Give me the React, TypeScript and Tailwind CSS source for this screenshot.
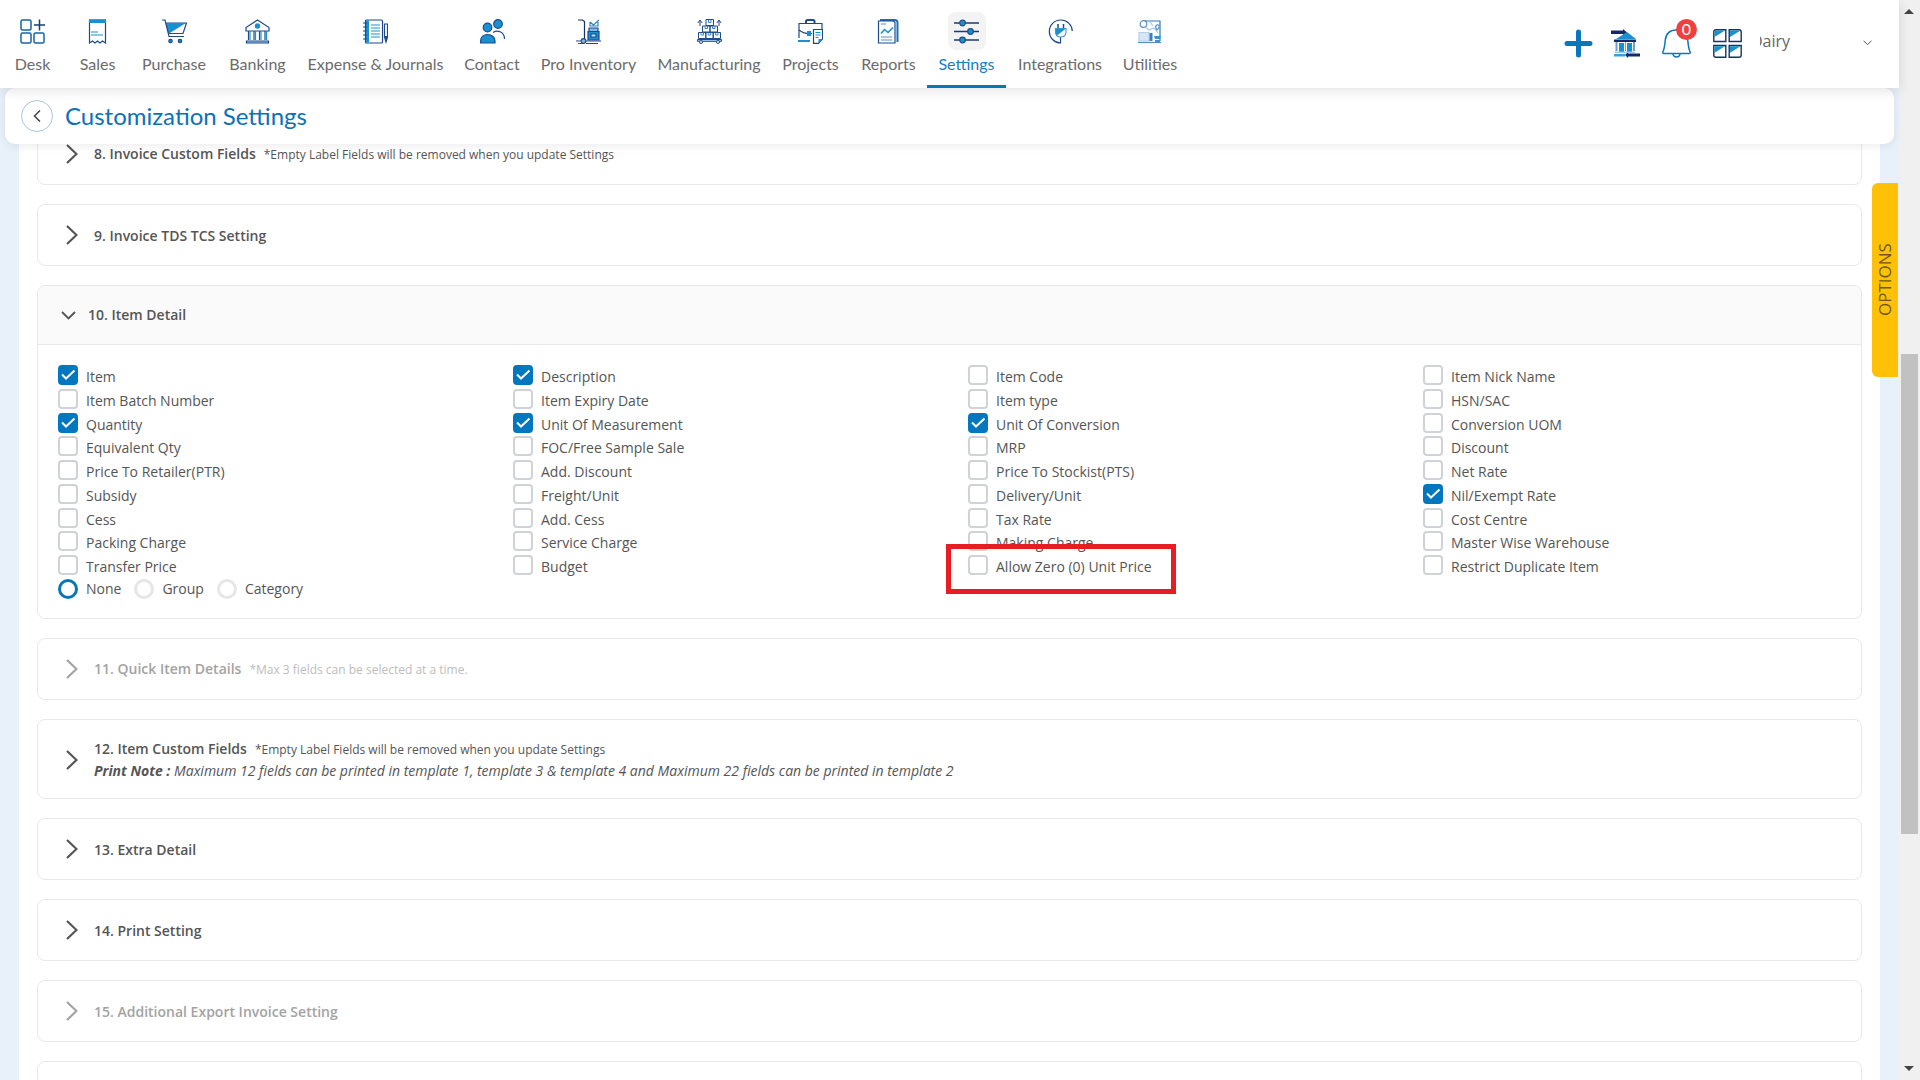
import { useState, type ReactNode } from "react";
import clsx from "clsx";

const NAVY = "#1f4a8a";
const BLUE = "#1791d0";

function Icon({ children, className = "size-[25px]" }: { children: ReactNode; className?: string }) {
    return (
        <svg viewBox="0 0 25 25" fill="none" stroke={NAVY} strokeWidth="1.2" className={className} aria-hidden="true">
            {children}
        </svg>
    );
}

// Top navigation, icons are two-tone line drawings
const NAV_ITEMS = [
    {
        label: "Desk",
        width: "w-[65px]",
        icon: (
            <Icon>
                <g stroke="#1b62a5" strokeWidth="1.5">
                    <rect x="1" y="1" width="10" height="10" rx="1.5" />
                    <rect x="1" y="14" width="10" height="10" rx="1.5" />
                    <rect x="14" y="14" width="10" height="10" rx="1.5" />
                </g>
                <path d="M19.5 .5v11M14 6h11" stroke="#1d3b72" strokeWidth="1.5" />
            </Icon>
        ),
    },
    {
        label: "Sales",
        width: "w-[65px]",
        icon: (
            <Icon>
                <path d="M4.5 1h16v23l-3-2-2.5 2-2.5-2-2.5 2-2.5-2-3 2z" />
                <path d="M4 .5h17V4H4z" fill={BLUE} stroke="none" />
                <path d="M6 13h7M6 16h12" stroke={BLUE} />
            </Icon>
        ),
    },
    {
        label: "Purchase",
        width: "w-[88px]",
        icon: (
            <Icon>
                <path d="M0 1h3l4 16.5h15" />
                <path d="M4.5 4H24.5L21 14.5H7z" />
                <path d="M4.5 4H24L7 14.5z" fill={BLUE} stroke="none" />
                <circle cx="8.5" cy="22" r="1.7" fill={BLUE} />
                <circle cx="18" cy="22" r="1.7" fill={BLUE} />
            </Icon>
        ),
    },
    {
        label: "Banking",
        width: "w-[79px]",
        icon: (
            <Icon>
                <path d="M12.5 1 24 8.5V12H1V8.5z" />
                <circle cx="12.5" cy="7" r="2.7" fill={BLUE} stroke="none" />
                <path d="M3.5 12v9M9 12v9M14.5 12v9M20 12v9" />
                <path d="M5 12v9M10.5 12v9M16 12v9M21.5 12v9" stroke={BLUE} />
                <path d="M1.5 22h22v2h-22z" fill="#9fc9ec" />
            </Icon>
        ),
    },
    {
        label: "Expense & Journals",
        width: "w-[157px]",
        icon: (
            <Icon>
                <rect x="2.5" y="1" width="17" height="23" rx="1" />
                <path d="M3 1.5h3v22H3z" fill={BLUE} stroke="none" />
                <path d="M0 4h4M0 8h4M0 12h4M0 16h4M0 20h4" />
                <path d="M8 6h9M8 9h9M8 12h9M8 15h9M8 18h9" stroke={BLUE} />
                <path d="M21.5 5h3v13l-1.5 5-1.5-5z" />
                <path d="M21.5 17h3L23 23z" fill={NAVY} stroke="none" />
            </Icon>
        ),
    },
    {
        label: "Contact",
        width: "w-[76px]",
        icon: (
            <Icon>
                <circle cx="18" cy="5" r="4.3" fill={BLUE} />
                <circle cx="7.5" cy="8.5" r="4.3" fill={BLUE} />
                <path d="M.6 24v-2c0-4 3-6.5 7-6.5s7.4 2.5 7.4 6.5v2z" fill={BLUE} />
                <path d="M13 13.5c5-3 11.5-.5 11.5 6.5" />
            </Icon>
        ),
    },
    {
        label: "Pro Inventory",
        width: "w-[117px]",
        icon: (
            <Icon>
                <path d="M2 1h4.5l2 1.5V20" stroke="#1a2f63" />
                <path d="m14 3 3.5 3L23 1M14 3v4h8V3" stroke="#2f7fc2" />
                <path d="M13 9h9v3.5h-9z" fill="#7fb8e4" />
                <path d="M12 12.500h11V21H12z" fill={BLUE} />
                <path d="M15 15h5v3h-5z" fill="#bfe0f6" />
                <circle cx="7.5" cy="22" r="2.3" fill="#7fb8e4" />
                <path d="M0 22h5M10 22h15M2 24.5h5M10 24.5h12" />
            </Icon>
        ),
    },
    {
        label: "Manufacturing",
        width: "w-[124px]",
        icon: (
            <Icon>
                <g strokeWidth="1">
                    <path d="M9 .5h7.500v6H9zM5.500 7h7.500v6H5.500zM13 7h7.500v6H13zM1.500 13.500h7.300v6H1.500zM8.800 13.500h7.400v6H8.800zM16.200 13.500h7.300v6h-7.300z" />
                    <path d="M11.500 1v2.500H14V1M8 7v2.500h2.500V7M15.500 7v2.500H18V7M4 13.500V16h2.500v-2.500M11.200 13.500V16h2.500v-2.500M18.500 13.500V16H21v-2.500" stroke="#3f86c6" />
                    <path d="M.5 20.500h24v1.800H.5z" fill="#b9d8f2" />
                    <circle cx="4" cy="23" r="1.5" fill="#fff" />
                    <circle cx="21" cy="23" r="1.5" fill="#fff" />
                    <path d="M3 7V1.500M.8 4 3 1l2.200 3M22 7V1.500M19.800 4 22 1l2.200 3" />
                </g>
            </Icon>
        ),
    },
    {
        label: "Projects",
        width: "w-[79px]",
        icon: (
            <Icon>
                <path d="M8 4V2.5C8 1.5 8.5 1 9.5 1H15c1 0 1.500.5 1.500 1.500V4" strokeWidth="2" />
                <path d="M1 19V4.500h23V10" />
                <path d="M1 11c3 2.500 6 3.500 10 3.500h3" />
                <path d="M9 12h4v5H9z" fill={BLUE} stroke="none" />
                <path d="M0 22h12" stroke={BLUE} strokeWidth="2" />
                <path d="M15.500 10.500h9V20l-4 4.300h-5z" fill="#fff" />
                <path d="M17.500 13.500h5M17.500 16h5M17.500 18.500h3" stroke={BLUE} />
                <path d="M20.500 24v-4h4z" fill={BLUE} stroke="none" />
            </Icon>
        ),
    },
    {
        label: "Reports",
        width: "w-[77px]",
        icon: (
            <Icon>
                <path d="M4 1h15c1.500 0 2.500 1 2.500 2.500V23" stroke="#1873b8" strokeWidth="2" />
                <path d="M2.500 2h14c1.500 0 2.500.7 2.500 2.200V24H2.500z" fill="#fff" />
                <path d="m5 14.500 3.500-4 3.500 3 5-5" stroke={BLUE} strokeWidth="1.5" />
                <path d="M5 5h5M5 18h11M5 21h11" strokeWidth=".9" stroke="#3f86c6" />
            </Icon>
        ),
    },
    {
        label: "Settings",
        width: "w-[79px]",
        icon: (
            <Icon>
                <path d="M0 4h25M0 12.500h25M0 21h25" stroke="#1b3b74" strokeWidth="1.4" />
                <circle cx="8.5" cy="4" r="2.8" fill={BLUE} />
                <circle cx="16.5" cy="12.5" r="2.8" fill={BLUE} />
                <circle cx="8.5" cy="21" r="2.8" fill={BLUE} />
            </Icon>
        ),
    },
    {
        label: "Integrations",
        width: "w-[108px]",
        icon: (
            <Icon>
                <path d="M12.500 24.500V18M12.500 24A11.500 11.500 0 1 1 24.300 12" />
                <path d="M10 9V5M15.500 9V5" strokeWidth="1.5" />
                <path d="M7.500 9.500H18V13c0 3-2 5-5.300 5S7.500 16 7.500 13z" stroke="#5b9bd0" />
                <path d="M7.500 9.500H18l-9 7c-1-1-1.500-2-1.500-3.500z" fill={BLUE} stroke="none" />
            </Icon>
        ),
    },
    {
        label: "Utilities",
        width: "w-[72px]",
        icon: (
            <Icon>
                <path d="M5 2h17v20" stroke="#2f78b8" />
                <circle cx="5.5" cy="5" r="3.3" fill="#fff" stroke="#5b8fc4" />
                <path d="m7 8 4 3 5-2 4 5M12 3l3 4" stroke="#9fc9ec" />
                <path d="M19 11c-3-4 0-6 1.500-5s.5 3.500-1.500 5z" stroke="#5b8fc4" fill="#fff" />
                <path d="M1 13.500h10V22H1z" fill="#d6e6f7" stroke="#b5cfea" />
                <path d="M11.500 14h3v8h-3z" fill="#3d7fc0" stroke="none" />
                <path d="M16 17h7l-1 3h-5zM17 21h5v2h-5z" fill="#3d92d2" stroke="none" />
                <path d="M0 23.500h23" stroke="#5b8fc4" />
            </Icon>
        ),
    },
];

const ITEM_FIELDS = [
    ["Item", "Item Batch Number", "Quantity", "Equivalent Qty", "Price To Retailer(PTR)", "Subsidy", "Cess", "Packing Charge", "Transfer Price"],
    ["Description", "Item Expiry Date", "Unit Of Measurement", "FOC/Free Sample Sale", "Add. Discount", "Freight/Unit", "Add. Cess", "Service Charge", "Budget"],
    ["Item Code", "Item type", "Unit Of Conversion", "MRP", "Price To Stockist(PTS)", "Delivery/Unit", "Tax Rate", "Making Charge", "Allow Zero (0) Unit Price"],
    ["Item Nick Name", "HSN/SAC", "Conversion UOM", "Discount", "Net Rate", "Nil/Exempt Rate", "Cost Centre", "Master Wise Warehouse", "Restrict Duplicate Item"],
];

const ENABLED = ["Item", "Quantity", "Description", "Unit Of Measurement", "Unit Of Conversion", "Nil/Exempt Rate"];

function Header() {
    return (
        <header className="relative z-20 flex h-[88px] shrink-0 bg-white font-[Lato,sans-serif] shadow-[0_2px_12px_rgba(0,0,0,0.12)]">
            <nav className="flex">
                {NAV_ITEMS.map(({ label, width, icon }) => {
                    const active = label === "Settings";
                    return (
                        <a
                            key={label}
                            href="#"
                            className={clsx(
                                "flex shrink-0 flex-col items-center border-b-3 pt-3 text-base leading-5 whitespace-nowrap",
                                width,
                                active ? "border-[#0a76b5] text-[#1580c4]" : "border-transparent text-[#6b6b6b]"
                            )}
                        >
                            <span className={clsx("mb-1 flex size-[38px] items-center justify-center rounded-lg", active && "bg-[#f3f3f4]")}>{icon}</span>
                            {label}
                        </a>
                    );
                })}
            </nav>
            <div className="ml-auto flex items-center gap-[18px] pr-[25px] pb-[2px]">
                <button aria-label="Create new">
                    <svg viewBox="0 0 29 29" className="size-[29px]" stroke="#0a76bd" strokeWidth="5" strokeLinecap="round">
                        <path d="M14.500 3v23M3 14.500h23" />
                    </svg>
                </button>
                <button aria-label="Bank transfer">
                    <svg viewBox="0 0 29 29" className="size-[29px]">
                        <path d="M0 1.500h12V0l4 3.500L12 6V5H0zM29 24.500H17v-1.500L14 26l3 3v-1.500h12z" fill="#14286a" />
                        <path d="m5 10 11-7 9 7z" fill={BLUE} />
                        <path d="M3 10.500h22V13H3z" fill="#14286a" />
                        <path d="M8 14h5v9H8zM16 14h5v9h-5z" fill={BLUE} />
                        <path d="M4.500 13h2v9h-2zM14 13h1v9h-1zM22 13h2v9h-2z" fill="#6f9fd0" />
                        <path d="M4 22.500h20V24H4z" fill="#9fc9ec" />
                        <path d="M3 25h11v2.500H3z" fill="#3aa0dd" />
                    </svg>
                </button>
                <button aria-label="Notifications" className="relative ml-1">
                    <svg viewBox="0 0 29 29" className="size-[29px]" fill="none" stroke="#0f78bb" strokeWidth="1.5">
                        <path d="M2 24.500c-1.200 0-1.500-1-1-2 1.500-3 1.700-6 2.200-11C3.900 4.500 8 1 14.500 1S25.100 4.500 25.800 11.500c.5 5 .7 8 2.200 11 .5 1 .2 2-1 2z" />
                        <path d="M11 25c.5 4 6.500 4 7 0" />
                    </svg>
                    <span className="absolute -top-[10px] left-[14px] flex size-[21px] items-center justify-center rounded-full bg-[#ef4040] text-base text-white">0</span>
                </button>
                <button aria-label="Apps" className="ml-1">
                    <svg viewBox="0 0 29 29" className="size-[29px]" fill="#fff" stroke="#14365f" strokeWidth="1.4">
                        <path d="M3 .8h9.800v11.700H.8V3Q.8.8 3 .8zM16.200.8H26q2.200 0 2.200 2.200v9.500h-12zM.8 16.500h12v11.700H3Q.8 28.200.8 26zM16.200 16.500h12V26q0 2.200-2.200 2.200h-9.800z" />
                        <path d="M1.500 1.500H12L1.500 8zM17 1.500h10.500L17 8zM1.500 17.200H12l-10.500 6.500zM17 17.200h10.500L17 23.700z" fill={BLUE} stroke="none" />
                    </svg>
                </button>
                <button className="flex w-[114px] items-center justify-between" aria-label="Dairy account">
                    <span className="mb-1 flex w-[30px] justify-end overflow-hidden font-['Open_Sans',sans-serif] text-base leading-6 font-medium text-[#666]">Dairy</span>
                    <svg viewBox="0 0 9 6" className="mr-[2px] h-[6px] w-[9px]" fill="none" stroke="#555">
                        <path d="m.5.7 4 4 4-4" />
                    </svg>
                </button>
            </div>
        </header>
    );
}

function TitleBar() {
    return (
        <div className="relative z-10 mx-[5px] flex h-14 shrink-0 items-center gap-3 rounded-[10px] bg-white px-4 shadow-[0_2px_10px_rgba(0,0,0,0.08)]">
            <button aria-label="Back" className="flex size-8 items-center justify-center rounded-full border border-[#a9c6e2]">
                <svg viewBox="0 0 8 12" className="h-3 w-2" fill="none" stroke="#444" strokeWidth="1.5">
                    <path d="M7 .5 1.500 6 7 11.500" />
                </svg>
            </button>
            <h1 className="font-[Lato,sans-serif] text-2xl text-[#0a72b8]">Customization Settings</h1>
        </div>
    );
}

type SectionProps = { title: string; hint?: string; note?: ReactNode; disabled?: boolean };

function Section({ title, hint, note, disabled }: SectionProps) {
    return (
        <section className="rounded-lg border border-[#e8e8e8]">
            <button
                disabled={disabled}
                className={clsx("flex min-h-[60px] w-full items-center gap-4 pl-7 text-left", note && "pt-[18px] pb-[17px]", disabled ? "text-[#a3a3a3]" : "text-[#555]")}
            >
                <svg viewBox="0 0 12 20" className="h-5 w-3 shrink-0" fill="none" stroke="currentColor" strokeWidth="2.2">
                    <path d="m1 1 9.500 9L1 19" />
                </svg>
                <span>
                    <span className="flex items-baseline gap-2">
                        <span className="text-sm leading-[21px] font-semibold">{title}</span>
                        {hint && <span className={clsx("text-xs leading-[21px] font-medium", disabled && "text-[#bdbdbd]")}>{hint}</span>}
                    </span>
                    {note}
                </span>
            </button>
        </section>
    );
}

function FieldCheckbox({ label }: { label: string }) {
    const [checked, setChecked] = useState(ENABLED.includes(label));

    return (
        <label className="flex items-start gap-2 text-sm leading-6">
            <span className="grid size-5 shrink-0">
                <input
                    type="checkbox"
                    checked={checked}
                    onChange={(e) => setChecked(e.target.checked)}
                    className="col-start-1 row-start-1 size-5 appearance-none rounded-sm border-2 border-[#cfd2d6] bg-white checked:border-[#0077bf] checked:bg-[#0077bf]"
                />
                {checked && (
                    <svg viewBox="0 0 20 20" className="pointer-events-none col-start-1 row-start-1 size-5" fill="none" stroke="#fff" strokeWidth="2">
                        <path d="m4 9.500 4 4 8.500-8" />
                    </svg>
                )}
            </span>
            {label}
        </label>
    );
}

function ItemDetail() {
    const [group, setGroup] = useState("None");

    return (
        <section className="rounded-lg border border-[#e8e8e8]">
            <button className="flex h-[59px] w-full items-center gap-3 rounded-t-lg border-b border-[#e8e8e8] bg-[#fafafa] pl-[23px] text-left text-sm font-semibold text-[#555]">
                <svg viewBox="0 0 15 9" className="h-[9px] w-[15px]" fill="none" stroke="currentColor" strokeWidth="1.8">
                    <path d="m1 1 6.500 6.500L14 1" />
                </svg>
                10. Item Detail
            </button>
            <div className="pt-5 pb-[19px] text-[#555]">
                <div className="grid grid-cols-4 pr-[3px]">
                    {ITEM_FIELDS.map((column) => (
                        <div key={column[0]} className="grid h-[214px] auto-rows-fr pl-5">
                            {column.map((label) => (
                                <FieldCheckbox key={label} label={label} />
                            ))}
                        </div>
                    ))}
                </div>
                <div className="flex gap-[13px] pl-5 text-sm leading-5">
                    {["None", "Group", "Category"].map((option) => (
                        <label key={option} className="flex items-center gap-2">
                            <input
                                type="radio"
                                name="group"
                                checked={group === option}
                                onChange={() => setGroup(option)}
                                className="size-5 appearance-none rounded-full border-3 border-[#e6e6e6] checked:border-[#0a76b5]"
                            />
                            {option}
                        </label>
                    ))}
                </div>
            </div>
        </section>
    );
}

function ScrollRail() {
    return (
        <div className="flex w-[21px] shrink-0 flex-col bg-[#f0f0f0] px-[2px]" aria-hidden="true">
            <svg viewBox="0 0 16 20" className="h-5 w-4" fill="#444">
                <path d="M8 9l5 5H3z" />
            </svg>
            <div className="flex-[334]" />
            <div className="flex-[480] bg-[#c1c1c1]" />
            <div className="flex-[226]" />
            <svg viewBox="0 0 16 20" className="h-5 w-4" fill="#444">
                <path d="M8 11l5-5H3z" />
            </svg>
        </div>
    );
}

export default function App() {
    return (
        <div className="flex h-screen overflow-hidden bg-[#e8f1f9] font-['Open_Sans',sans-serif]">
            <div className="relative flex min-w-0 flex-1 flex-col">
                <Header />
                <TitleBar />
                <main className="flex-1 overflow-hidden px-[19px]">
                    {/* scrolled so that the first card sits partly under the title bar */}
                    <div className="-mt-[21px] flex flex-col gap-[19px] bg-white px-[18px]">
                        <Section title="8. Invoice Custom Fields" hint="*Empty Label Fields will be removed when you update Settings" />
                        <Section title="9. Invoice TDS TCS Setting" />
                        <ItemDetail />
                        <Section title="11. Quick Item Details" hint="*Max 3 fields can be selected at a time." disabled />
                        <Section
                            title="12. Item Custom Fields"
                            hint="*Empty Label Fields will be removed when you update Settings"
                            note={
                                <span className="block text-sm leading-[21px] italic">
                                    <b>Print Note :</b> Maximum 12 fields can be printed in template 1, template 3 &amp; template 4 and Maximum 22 fields can be printed in template 2
                                </span>
                            }
                        />
                        <Section title="13. Extra Detail" />
                        <Section title="14. Print Setting" />
                        <Section title="15. Additional Export Invoice Setting" disabled />
                        <section className="h-[62px] rounded-lg border border-[#e8e8e8]" />
                    </div>
                </main>

                <button className="absolute top-[183px] right-px flex h-[194px] w-[26px] rotate-180 items-center justify-center rounded-r-md bg-[#ffc107] text-[17px] text-[#6b5a1c] [writing-mode:vertical-rl]">
                    OPTIONS
                </button>

                {/* callout around "Allow Zero (0) Unit Price" */}
                <div className="pointer-events-none absolute top-[544px] left-[946px] h-[50px] w-[230px] border-5 border-[#e81c23]" />
            </div>
            <ScrollRail />
        </div>
    );
}
